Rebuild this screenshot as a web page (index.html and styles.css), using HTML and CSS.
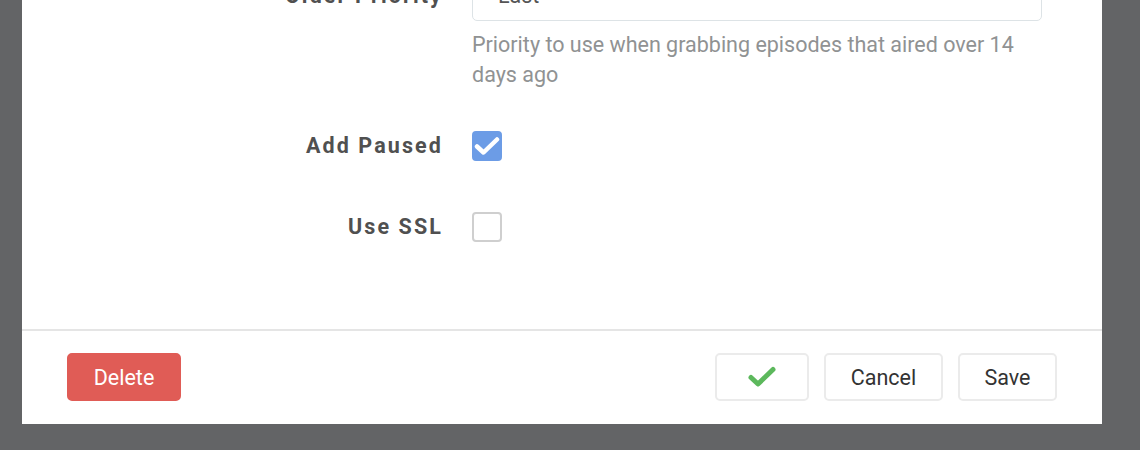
FILE: index.html
```html
<!DOCTYPE html>
<html>
<head>
<meta charset="utf-8">
<link rel="stylesheet" href="styles.css">
</head>
<body>
<div class="modal">
  <div class="modal-body">
    <div class="form-group group-select">
      <label class="form-label">Older Priority</label>
      <div class="form-control">
        <div class="select">Last</div>
        <div class="help">Priority to use when grabbing episodes that aired over 14 days ago</div>
      </div>
    </div>
    <div class="form-group">
      <label class="form-label">Add Paused</label>
      <div class="form-control">
        <span class="checkbox checked">
          <svg width="26" height="20" viewBox="0 0 26 20"><polyline points="3,10.5 9.5,16.5 23,3.5" fill="none" stroke="#fff" stroke-width="4.5" stroke-linecap="round" stroke-linejoin="round"/></svg>
        </span>
      </div>
    </div>
    <div class="form-group">
      <label class="form-label">Use SSL</label>
      <div class="form-control">
        <span class="checkbox"></span>
      </div>
    </div>
  </div>
  <div class="modal-footer">
    <button class="btn btn-danger">Delete</button>
    <div class="spacer"></div>
    <button class="btn btn-test">
      <svg width="30" height="22" viewBox="0 0 30 22"><polyline points="4,11.5 11,18 26,3.5" fill="none" stroke="#5cb85c" stroke-width="5" stroke-linecap="round" stroke-linejoin="round"/></svg>
    </button>
    <button class="btn btn-cancel">Cancel</button>
    <button class="btn btn-save">Save</button>
  </div>
</div>
</body>
</html>
```

FILE: styles.css
```css
html, body {
  margin: 0;
  padding: 0;
  background: #636466;
  height: 100%;
  overflow: hidden;
  font-family: Roboto, "Liberation Sans", sans-serif;
}

.modal {
  margin-left: 22px;
  width: 1080px;
  background: #fff;
  margin-top: -60px;
}

.modal-body {
  padding: 31px 0 77px 0;
}

.form-group {
  display: flex;
  align-items: flex-start;
  margin-bottom: 31px;
}

.form-group:last-child {
  margin-bottom: 0;
}

.form-label {
  width: 421px;
  flex: none;
  text-align: right;
  font-weight: 700;
  font-size: 21.5px;
  letter-spacing: 2.1px;
  color: #505050;
  line-height: 50px;
  height: 50px;
  padding-right: 29px;
}

.form-control {
  display: flex;
  flex-direction: column;
  min-height: 50px;
  justify-content: center;
}

.select {
  box-sizing: border-box;
  width: 570px;
  height: 50px;
  border: 1px solid #dde3e6;
  border-radius: 5px;
  padding: 0 25px;
  font-size: 21.5px;
  line-height: 48px;
  color: #555;
}

.help {
  width: 570px;
  margin-top: 9px;
  font-size: 21.5px;
  line-height: 30px;
  color: #909293;
}

.checkbox {
  box-sizing: border-box;
  width: 30px;
  height: 30px;
  border: 2px solid #cfcfcf;
  border-radius: 4px;
  display: flex;
  align-items: center;
  justify-content: center;
  background: #fff;
}

.checkbox.checked {
  background: #6c9ce6;
  border-color: #6c9ce6;
}

.modal-footer {
  border-top: 2px solid #e5e5e5;
  padding: 22px 45px 23px 45px;
  display: flex;
  align-items: center;
}

.spacer {
  flex: 1;
}

.btn {
  box-sizing: border-box;
  height: 48px;
  border: 2px solid #ebebeb;
  border-radius: 5px;
  background: #fff;
  font-family: Roboto, "Liberation Sans", sans-serif;
  font-size: 21.5px;
  color: #333;
  display: flex;
  align-items: center;
  justify-content: center;
  padding: 0;
  margin: 0;
}

.btn-danger {
  width: 114px;
  background: #e05c56;
  border-color: #e05c56;
  color: #fff;
}

.btn-test {
  width: 94px;
  margin-right: 15px;
}

.btn-cancel {
  width: 119px;
  margin-right: 15px;
}

.btn-save {
  width: 99px;
}
```
